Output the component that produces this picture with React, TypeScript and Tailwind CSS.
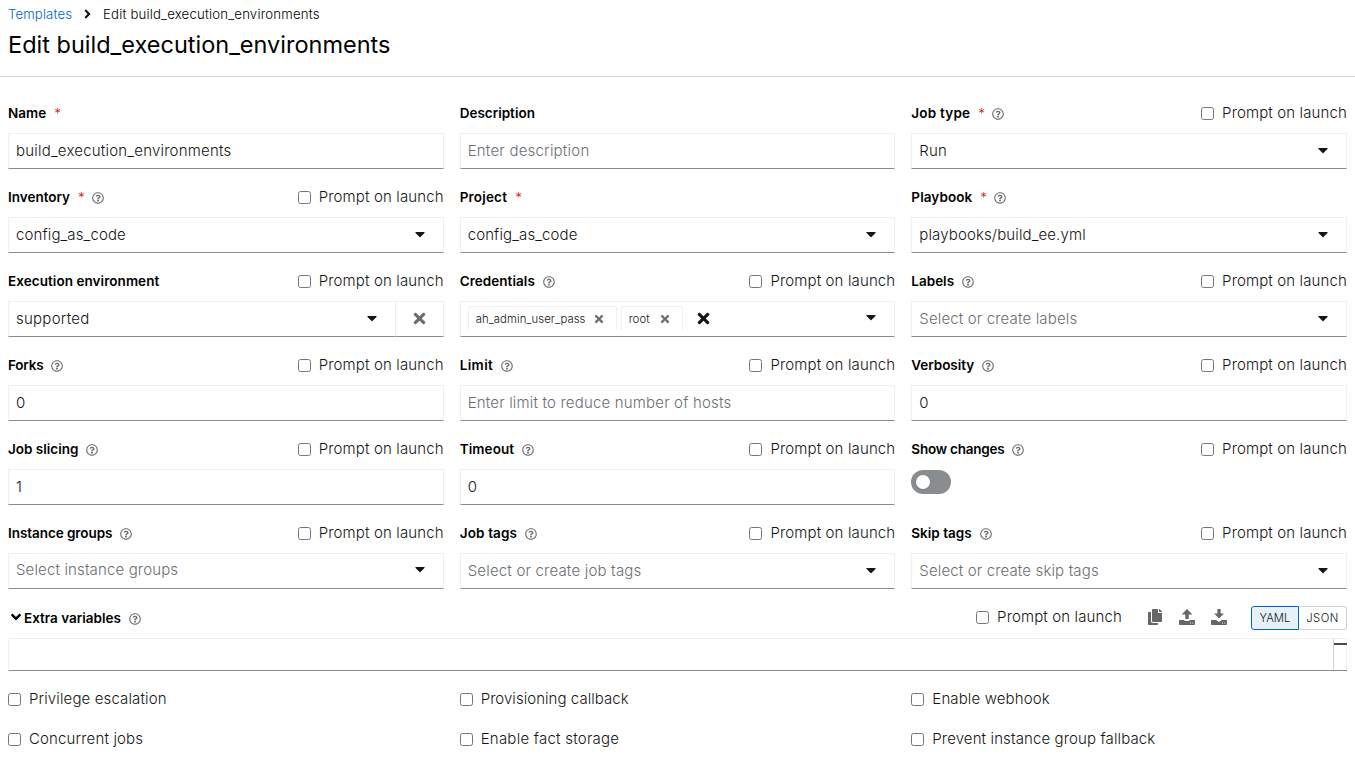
import type { ReactNode } from 'react'
import { FaAngleDown, FaAngleRight, FaCaretDown, FaCopy, FaRegQuestionCircle, FaTimes } from 'react-icons/fa'

function Check({ label, className = '' }: { label: string; className?: string }) {
  return (
    <label className="flex h-6 items-center gap-2 whitespace-nowrap">
      <input type="checkbox" className="m-0 h-[13px] w-[13px] shrink-0" />
      <span className={`text-[15px] leading-6 ${className}`}>{label}</span>
    </label>
  )
}

function Help() {
  return <FaRegQuestionCircle className="mt-px h-3 w-3 shrink-0 text-[#6a6e73]" />
}

type FieldProps = {
  label: string
  tracking?: string
  required?: boolean
  help?: boolean
  prompt?: boolean
  children: ReactNode
}

function Field({ label, tracking = '', required, help, prompt, children }: FieldProps) {
  return (
    <div className="flex h-[68px] min-w-0 flex-col gap-2">
      <div className="flex h-6 shrink-0 items-center justify-between">
        <div className="flex items-center gap-2">
          <span className={`text-[13.5px] leading-6 font-semibold whitespace-nowrap text-black ${tracking}`}>{label}</span>
          {required && <span className="w-[6px] text-[13.5px] leading-6 text-[#c9190b]">*</span>}
          {help && <Help />}
        </div>
        {prompt && <Check label="Prompt on launch" className="tracking-[0.13px]" />}
      </div>
      {children}
    </div>
  )
}

const box = 'flex h-9 min-w-0 items-center border border-[#f0f0f0] border-b-[#8a8d90] bg-white pl-[7px]'

function Value({ text, placeholder, tracking = 'tracking-[0.12px]' }: { text: string; placeholder?: boolean; tracking?: string }) {
  return (
    <span className={`grow truncate text-[15px] leading-6 ${tracking} ${placeholder ? 'text-[#6a6e73]' : 'text-[#151515]'}`}>
      {text}
    </span>
  )
}

function Input(props: { text: string; placeholder?: boolean; tracking?: string }) {
  return (
    <div className={box}>
      <Value {...props} />
    </div>
  )
}

function Select(props: { text: string; placeholder?: boolean; tracking?: string }) {
  return (
    <div className={`${box} grow pr-[18px]`}>
      <Value {...props} />
      <FaCaretDown className="mb-[2px] h-4 w-[10px] shrink-0" />
    </div>
  )
}

function Chip({ text, className }: { text: string; className: string }) {
  return (
    <span className={`flex h-6 shrink-0 items-center rounded-t-[3px] border border-b-0 border-[#f0f0f0] pl-[7px] ${className}`}>
      <span className="grow text-[11.3px] leading-[18px] tracking-[0.08px]">{text}</span>
      <FaTimes className="h-3 w-[10px] shrink-0 text-[#6a6e73]" />
    </span>
  )
}

function TransferIcon({ down }: { down?: boolean }) {
  return (
    <svg viewBox="0 0 16 16" className="-mt-px h-4 w-4 shrink-0" fill="currentColor">
      <path d={down ? 'M6.4 0h3.2v4.6h3.3L8 9.6 3.1 4.6h3.3z' : 'M8 0l5.4 5.4H9.7V10H6.3V5.4H2.6z'} />
      <path
        fillRule="evenodd"
        d={
          down
            ? 'M.8 11h4.4L8 13l2.8-2h4.4q.8 0 .8.8v3.4q0 .8-.8.8H.8q-.8 0-.8-.8v-3.4Q0 11 .8 11zM11 13.6v1h1v-1zM13.3 13.6v1h1v-1z'
            : 'M.8 11h4.7v1h5v-1h4.7q.8 0 .8.8v3.4q0 .8-.8.8H.8q-.8 0-.8-.8v-3.4Q0 11 .8 11zM11 13.6v1h1v-1zM13.3 13.6v1h1v-1z'
        }
      />
    </svg>
  )
}

export default function App() {
  return (
    <div className="h-[765px] overflow-hidden bg-white font-['Inter','Liberation_Sans',sans-serif] font-[350] text-[#151515]">
      <header className="h-[77px] border-b border-[#d2d2d2] px-2 pt-1">
        <nav className="flex h-5 items-center text-[13.2px] leading-5 tracking-[0.12px]">
          <a className="w-[75px] text-[#06c]">Templates</a>
          <FaAngleRight className="h-[14px] w-[9px] shrink-0" />
          <span className="ml-[11px] tracking-[0.18px] text-black">Edit build_execution_environments</span>
        </nav>
        <h1 className="mt-[5px] text-[23.5px] leading-[31px] font-normal text-black">Edit build_execution_environments</h1>
      </header>

      <main className="flex flex-col gap-4 px-2 pt-6">
        <div className="grid grid-cols-3 gap-4">
          <Field label="Name" required>
            <Input text="build_execution_environments" tracking="tracking-[0.21px]" />
          </Field>
          <Field label="Description">
            <Input text="Enter description" placeholder tracking="tracking-[0.22px]" />
          </Field>
          <Field label="Job type" tracking="tracking-[0.2px]" required help prompt>
            <Select text="Run" />
          </Field>

          <Field label="Inventory" required help prompt>
            <Select text="config_as_code" />
          </Field>
          <Field label="Project" tracking="tracking-[0.19px]" required>
            <Select text="config_as_code" />
          </Field>
          <Field label="Playbook" tracking="tracking-[0.09px]" required help>
            <Select text="playbooks/build_ee.yml" />
          </Field>

          <Field label="Execution environment" tracking="tracking-[0.06px]" prompt>
            <div className="flex">
              <Select text="supported" tracking="tracking-[0.25px]" />
              <button className="flex h-9 w-12 shrink-0 items-center justify-center border border-l-0 border-[#f0f0f0] border-b-[#8a8d90] pb-px pl-px text-[#6a6e73]">
                <FaTimes className="h-[17px] w-[17px]" />
              </button>
            </div>
          </Field>
          <Field label="Credentials" tracking="tracking-[0.05px]" help prompt>
            <div className={`${box} pr-[18px]`}>
              <div className="mt-1 flex h-6 grow items-center gap-1 self-start">
                <Chip text="ah_admin_user_pass" className="w-[149px] pr-[12px]" />
                <Chip text="root" className="w-[62px] pr-[12px]" />
                <FaTimes className="ml-2 h-[17px] w-[17px] shrink-0" />
              </div>
              <FaCaretDown className="mb-1 h-4 w-[10px] shrink-0" />
            </div>
          </Field>
          <Field label="Labels" help prompt>
            <Select text="Select or create labels" placeholder tracking="tracking-[0.15px]" />
          </Field>

          <Field label="Forks" tracking="tracking-[-0.2px]" help prompt>
            <Input text="0" />
          </Field>
          <Field label="Limit" tracking="tracking-[0.4px]" help prompt>
            <Input text="Enter limit to reduce number of hosts" placeholder tracking="tracking-[0.18px]" />
          </Field>
          <Field label="Verbosity" tracking="tracking-[-0.05px]" help prompt>
            <Input text="0" />
          </Field>

          <Field label="Job slicing" help prompt>
            <Input text="1" />
          </Field>
          <Field label="Timeout" tracking="tracking-[0.1px]" help prompt>
            <Input text="0" />
          </Field>
          <Field label="Show changes" tracking="tracking-[-0.22px]" help prompt>
            <button className="mt-px flex h-6 w-10 shrink-0 items-center rounded-full bg-[#8a8d90] pl-[5px]">
              <span className="h-[14px] w-[14px] rounded-full bg-white shadow-sm" />
            </button>
          </Field>

          <Field label="Instance groups" tracking="tracking-[-0.06px]" help prompt>
            <div className={`${box} pr-[18px] pb-0.5 text-[#6a6e73]`}>
              <span className="grow text-[15px] leading-6 tracking-[0.14px]">Select instance groups</span>
              <FaCaretDown className="mb-[2px] h-4 w-[10px] shrink-0 text-[#151515]" />
            </div>
          </Field>
          <Field label="Job tags" tracking="tracking-[0.15px]" help prompt>
            <Select text="Select or create job tags" placeholder tracking="tracking-[0.19px]" />
          </Field>
          <Field label="Skip tags" help prompt>
            <Select text="Select or create skip tags" placeholder tracking="tracking-[0.14px]" />
          </Field>
        </div>

        <section>
          <div className="flex h-[33px] items-start justify-between">
            <div className="flex h-[26px] items-center pl-[3px]">
              <FaAngleDown className="-mt-0.5 h-4 w-[10px] shrink-0 text-black" />
              <span className="mr-2 ml-[3px] text-[13.5px] leading-6 font-semibold text-black">Extra variables</span>
              <Help />
            </div>
            <div className="flex h-6 items-center">
              <Check label="Prompt on launch" className="tracking-[0.13px]" />
              <div className="mr-6 ml-[25px] flex gap-4 text-[#666]">
                <FaCopy className="-mt-px h-4 w-4" />
                <TransferIcon />
                <TransferIcon down />
              </div>
              <div className="mt-[2px] flex h-6 text-[11.3px]">
                <button className="flex w-12 items-center justify-center rounded-l-[3px] border border-[#06c] bg-[#e7f1fa]">YAML</button>
                <button className="flex w-12 items-center justify-center rounded-r-[3px] border border-l-0 border-[#d2d2d2] tracking-[0.5px]">JSON</button>
              </div>
            </div>
          </div>
          <div className="flex h-[33px] justify-end border border-r-0 border-[#f0f0f0] border-b-[#8a8d90]">
            <div className="w-[14px] border-x border-r-[#f0f0f0] border-l-[#d2d2d2] pt-1">
              <div className="h-0.5 w-[13px] bg-[#4a4a4a]" />
            </div>
          </div>
        </section>

        <div className="grid grid-cols-3 gap-4">
          <Check label="Privilege escalation" className="tracking-[0.13px]" />
          <Check label="Provisioning callback" className="tracking-[0.05px]" />
          <Check label="Enable webhook" className="tracking-[0.13px]" />
          <Check label="Concurrent jobs" className="tracking-[0.15px]" />
          <Check label="Enable fact storage" className="tracking-[0.24px]" />
          <Check label="Prevent instance group fallback" className="tracking-[0.12px]" />
        </div>
      </main>
    </div>
  )
}
